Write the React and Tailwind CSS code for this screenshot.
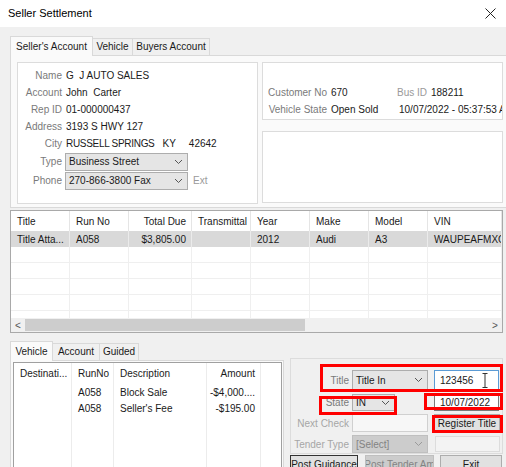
import React from 'react';

const Chevron = ({ color = '#555' }) => (
  <svg width="9" height="6" viewBox="0 0 9 6" fill="none">
    <path d="M1 1l3.5 3.5L8 1" stroke={color} strokeWidth="1" />
  </svg>
);

function Select({ value, className = '', disabled }) {
  return (
    <div
      className={`flex items-center justify-between pl-[3px] pr-[4px] border ${
        disabled ? 'bg-[#cccccc] border-[#bfbfbf] text-[#838383]' : 'bg-[#e5e5e5] border-[#adadad]'
      } ${className}`}
    >
      <span>{value}</span>
      <Chevron color={disabled ? '#9a9a9a' : '#555'} />
    </div>
  );
}

function InfoRow({ label, children, className = 'h-[17px]' }) {
  return (
    <div className={`flex items-center ${className}`}>
      <span className="w-[44px] shrink-0 text-right text-[#7a7a7a]">{label}</span>
      {children}
    </div>
  );
}

const gridCols = [
  { name: 'Title', w: 'w-[59px]' },
  { name: 'Run No', w: 'w-[59px]' },
  { name: 'Total Due', w: 'w-[63px]', right: true },
  { name: 'Transmittal', w: 'w-[59px]' },
  { name: 'Year', w: 'w-[59px]' },
  { name: 'Make', w: 'w-[59px]' },
  { name: 'Model', w: 'w-[59px]' },
  { name: 'VIN', w: 'flex-1' },
];

const gridRow = ['Title Atta...', 'A058', '$3,805.00', '', '2012', 'Audi', 'A3', 'WAUPEAFMXCA'];

const listCols = [
  { name: 'Destinati...', w: 'w-[58px]' },
  { name: 'RunNo', w: 'w-[42px]' },
  { name: 'Description', w: 'w-[93px]' },
  { name: 'Amount', w: 'w-[54px]', right: true },
  { name: '', w: 'flex-1' },
];

const listRows = [
  ['', 'A058', 'Block Sale', '-$4,000....', ''],
  ['', 'A058', "Seller's Fee", '-$195.00', ''],
];

function Tab({ label, active, w }) {
  return active ? (
    <div className={`${w} h-[20px] bg-[#fafafa] border border-b-0 border-[#d9d9d9] text-center leading-[19px] relative z-10 -mb-px`}>
      {label}
    </div>
  ) : (
    <div className={`${w} h-[17px] bg-[#f0f0f0] border-t border-r border-[#d9d9d9] text-center leading-[16px]`}>
      {label}
    </div>
  );
}

export default function App() {
  return (
    <div className="w-[506px] h-[467px] bg-[#f0f0f0] overflow-hidden relative whitespace-nowrap text-[10px] text-[#1a1a1a] font-['Liberation_Sans',Arial,sans-serif]">
      {/* Title bar */}
      <div className="h-[27px] bg-white flex items-center justify-between pl-[8px] pr-[10px]">
        <span className="text-[11px] text-black">Seller Settlement</span>
        <svg width="11" height="11" viewBox="0 0 11 11">
          <path d="M0.5 0.5l10 10M10.5 0.5l-10 10" stroke="#222" strokeWidth="1" />
        </svg>
      </div>

      {/* Top tabs */}
      <div className="pt-[8px] pl-[10px]">
        <div className="flex items-end h-[20px]">
          <Tab label="Seller's Account" active w="w-[83px]" />
          <Tab label="Vehicle" w="w-[40px]" />
          <Tab label="Buyers Account" w="w-[77px]" />
        </div>
        <div className="h-[153px] bg-[#fafafa] border border-r-0 border-[#d9d9d9] flex gap-[4px] pl-[6px] pt-[6px]">
          {/* Seller info */}
          <div className="w-[241px] h-[142px] bg-white border border-[#dcdcdc] pt-[4px]">
            <InfoRow label="Name"><span className="ml-[4px]">G&nbsp;&nbsp;J AUTO SALES</span></InfoRow>
            <InfoRow label="Account"><span className="ml-[4px]">John&nbsp;&nbsp;Carter</span></InfoRow>
            <InfoRow label="Rep ID"><span className="ml-[4px]">01-000000437</span></InfoRow>
            <InfoRow label="Address"><span className="ml-[4px]">3193 S HWY 127</span></InfoRow>
            <InfoRow label="City">
              <span className="ml-[4px] tracking-[-0.3px]">RUSSELL SPRINGS</span>
              <span className="ml-[8px]">KY</span>
              <span className="ml-[13px]">42642</span>
            </InfoRow>
            <InfoRow label="Type" className="h-[19px]">
              <Select value="Business Street" className="ml-[3px] w-[123px] h-[18px]" />
            </InfoRow>
            <InfoRow label="Phone" className="h-[19px]">
              <Select value="270-866-3800 Fax" className="ml-[3px] w-[123px] h-[18px]" />
              <span className="ml-[5px] text-[#9a9a9a]">Ext</span>
            </InfoRow>
          </div>

          {/* Customer info */}
          <div className="w-[241px] flex flex-col gap-[11px]">
            <div className="h-[58px] bg-white border border-[#dcdcdc] pt-[21px] overflow-hidden">
              <div className="flex items-center h-[17px]">
                <span className="w-[64px] shrink-0 text-right text-[#7a7a7a]">Customer No</span>
                <span className="ml-[4px] w-[64px] shrink-0">670</span>
                <span className="w-[32px] shrink-0 text-right text-[#9a9a9a]">Bus ID</span>
                <span className="ml-[4px]">188211</span>
              </div>
              <div className="flex items-center h-[17px]">
                <span className="w-[64px] shrink-0 text-right text-[#7a7a7a]">Vehicle State</span>
                <span className="ml-[4px] w-[64px] shrink-0">Open Sold</span>
                <span className="ml-[4px]">10/07/2022 - 05:37:53 AM</span>
              </div>
            </div>
            <div className="h-[72px] bg-white border border-[#dcdcdc]" />
          </div>
        </div>
      </div>

      {/* Vehicle grid */}
      <div className="mt-[2px] ml-[10px] w-[493px] h-[123px] bg-white border border-[#a9a9a9] flex flex-col overflow-hidden">
        <div className="flex h-[20px] shrink-0">
          {gridCols.map((c) => (
            <div
              key={c.name}
              className={`${c.w} shrink-0 h-full flex items-center border-r border-[#e5e5e5] ${
                c.right ? 'justify-end pr-[5px]' : 'pl-[6px]'
              }`}
            >
              {c.name}
            </div>
          ))}
        </div>
        <div className="flex h-[16px] shrink-0 bg-[#d9d9d9]">
          {gridRow.map((v, i) => (
            <div
              key={i}
              className={`${gridCols[i].w} shrink-0 h-full flex items-center border-r border-[#ebebeb] overflow-hidden ${
                gridCols[i].right ? 'justify-end pr-[5px]' : 'pl-[6px]'
              }`}
            >
              {v}
            </div>
          ))}
        </div>
        <div className="flex-1 flex flex-col overflow-hidden">
          {[0, 1, 2, 3, 4].map((r) => (
            <div key={r} className="flex h-[16px] shrink-0 border-b border-[#efefef]">
              {gridCols.map((c) => (
                <div key={c.name} className={`${c.w} shrink-0 h-full border-r border-[#efefef]`} />
              ))}
            </div>
          ))}
        </div>
        <div className="h-[14px] shrink-0 bg-[#f0f0f0] flex items-center">
          <span className="w-[14px] text-center text-[10px] text-[#555]">&lt;</span>
          <div className="w-[280px] h-[12px] bg-[#cdcdcd]" />
          <span className="flex-1" />
          <span className="w-[14px] text-center text-[10px] text-[#555]">&gt;</span>
        </div>
      </div>

      {/* Bottom section */}
      <div className="flex mt-[7px] pl-[10px]">
        <div className="w-[274px] shrink-0">
          <div className="flex items-end h-[20px]">
            <Tab label="Vehicle" active w="w-[43px]" />
            <Tab label="Account" w="w-[47px]" />
            <Tab label="Guided" w="w-[39px]" />
          </div>
          <div className="h-[120px] bg-[#fafafa] border border-[#d9d9d9] pl-[2px] pt-px">
            <div className="w-[269px] h-[118px] bg-white border border-[#a0a0a0] flex flex-col">
              <div className="flex h-[21px] shrink-0">
                {listCols.map((c, i) => (
                  <div
                    key={i}
                    className={`${c.w} shrink-0 flex items-center ${i < 4 ? 'border-r border-[#ececec]' : ''} ${
                      c.right ? 'justify-end pr-[5px]' : 'pl-[6px]'
                    }`}
                  >
                    {c.name}
                  </div>
                ))}
              </div>
              {listRows.map((row, r) => (
                <div key={r} className="flex h-[16px] shrink-0">
                  {row.map((v, i) => (
                    <div
                      key={i}
                      className={`${listCols[i].w} shrink-0 flex items-center ${i < 4 ? 'border-r border-[#ececec]' : ''} ${
                        listCols[i].right ? 'justify-end pr-[5px]' : 'pl-[6px]'
                      }`}
                    >
                      {v}
                    </div>
                  ))}
                </div>
              ))}
              <div className="flex flex-1">
                {listCols.map((c, i) => (
                  <div key={i} className={`${c.w} shrink-0 ${i < 4 ? 'border-r border-[#ececec]' : ''}`} />
                ))}
              </div>
            </div>
          </div>
        </div>

        {/* Title controls */}
        <div className="ml-[6px] mt-[18px] w-[213px] shrink-0">
          <div className="h-[96px] border border-[#dcdcdc] pt-[11px] flex flex-col">
            <div className="flex items-center h-[20px]">
              <span className="w-[58px] shrink-0 text-right text-[#7a7a7a]">Title</span>
              <Select value="Title In" className="ml-[3px] w-[76px] h-[20px]" />
              <div className="ml-[6px] w-[65px] h-[20px] bg-white border border-[#5b9bd5] flex items-center pl-[5px] relative">
                123456
                <svg className="absolute right-[10px] top-[2px]" width="6" height="15" viewBox="0 0 6 15">
                  <path d="M0.5 0.5h5M3 0.5v14M0.5 14.5h5" stroke="#333" strokeWidth="1" />
                </svg>
              </div>
            </div>
            <div className="flex items-center h-[17px] mt-[4px]">
              <span className="w-[58px] shrink-0 text-right text-[#7a7a7a]">State</span>
              <Select value="IN" className="ml-[3px] w-[43px] h-[17px]" />
              <div className="ml-[39px] w-[65px] h-[17px] bg-white border border-[#7a7a7a] flex items-center pl-[5px]">
                10/07/2022
              </div>
            </div>
            <div className="flex items-center h-[18px] mt-[3px]">
              <span className="w-[58px] shrink-0 text-right text-[#a6a6a6]">Next Check</span>
              <div className="ml-[3px] w-[76px] h-[18px] bg-[#f7f7f7] border border-[#d0d0d0]" />
              <div className="ml-[6px] w-[66px] h-[18px] bg-[#e1e1e1] border border-[#adadad] flex items-center justify-center">
                Register Title
              </div>
            </div>
            <div className="flex items-center h-[18px] mt-[3px]">
              <span className="w-[58px] shrink-0 text-right text-[#a6a6a6]">Tender Type</span>
              <Select value="[Select]" disabled className="ml-[3px] w-[76px] h-[18px]" />
              <div className="ml-[7px] w-[65px] h-[16px] bg-[#f3f3f3] border border-[#dcdcdc]" />
            </div>
          </div>
          <div className="flex mt-px h-[18px]">
            <div className="w-[68px] h-[18px] bg-[#e1e1e1] border border-[#333] flex items-center justify-center">
              Post Guidance
            </div>
            <div className="ml-[7px] w-[69px] h-[18px] bg-[#cccccc] border border-[#bfbfbf] text-[#838383] flex items-center justify-center overflow-hidden">
              Post Tender Am
            </div>
            <div className="ml-[6px] w-[62px] h-[18px] bg-[#e1e1e1] border border-[#adadad] flex items-center justify-center">
              Exit
            </div>
          </div>
        </div>
      </div>

      {/* Red highlight annotations */}
      <div className="absolute left-[320px] top-[364px] w-[183px] h-[28px] border-[3px] border-[#ff0000]" />
      <div className="absolute left-[319px] top-[396px] w-[78px] h-[19px] border-[3px] border-[#ff0000]" />
      <div className="absolute left-[424px] top-[393px] w-[79px] h-[17px] border-[3px] border-[#ff0000]" />
      <div className="absolute left-[432px] top-[415px] w-[71px] h-[18px] border-[3px] border-[#ff0000]" />
    </div>
  );
}
